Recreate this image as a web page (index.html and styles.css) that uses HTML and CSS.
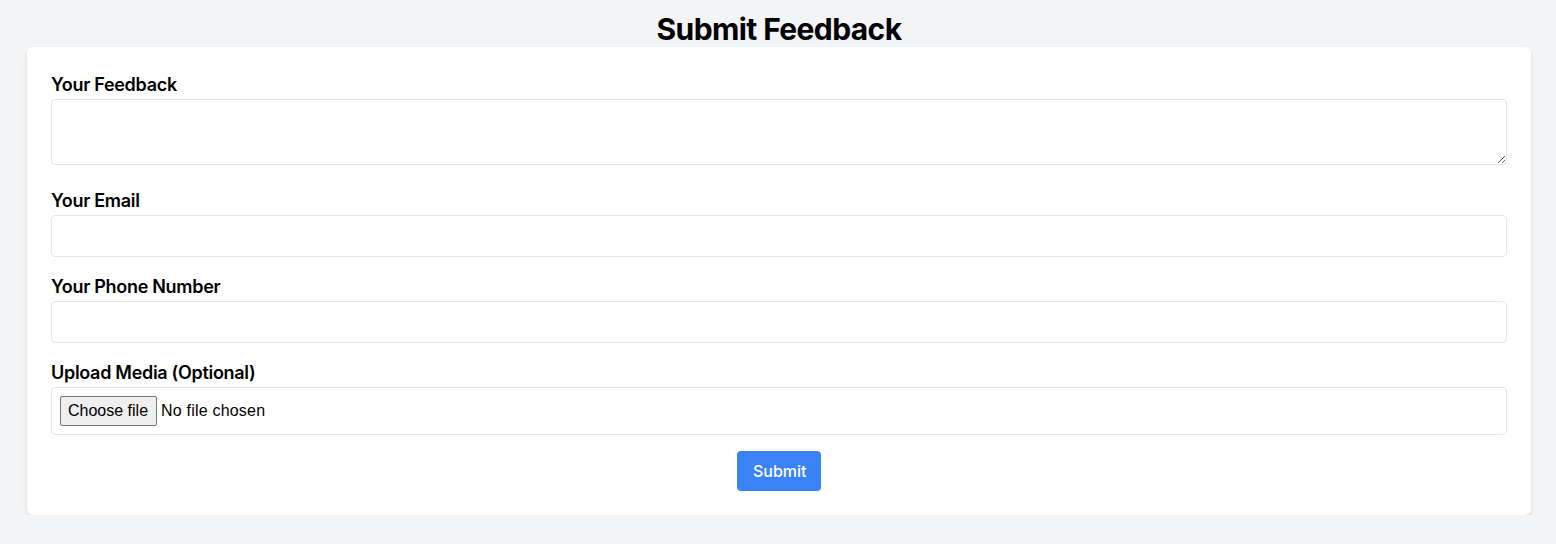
FILE: index.html
```html
<!DOCTYPE html>
<html lang="en">
<head>
<meta charset="utf-8">
<title>Submit Feedback</title>
<link rel="stylesheet" href="styles.css">
</head>
<body>
<h1 class="title">Submit Feedback</h1>
<form class="card">
  <div class="field field-tall">
    <label class="label" for="fb">Your Feedback</label>
    <textarea id="fb" class="control area" rows="2"></textarea>
  </div>
  <div class="field">
    <label class="label" for="em">Your Email</label>
    <input id="em" class="control" type="email">
  </div>
  <div class="field">
    <label class="label" for="ph">Your Phone Number</label>
    <input id="ph" class="control" type="tel">
  </div>
  <div class="field">
    <label class="label" for="md">Upload Media (Optional)</label>
    <div class="control file">
      <input id="md" class="file-input" type="file">
      <label class="file-btn" for="md">Choose file</label>
      <span class="file-status">No file chosen</span>
    </div>
  </div>
  <div class="actions">
    <button class="submit" type="button">Submit</button>
  </div>
</form>
</body>
</html>
```
FILE: styles.css
```css
* { box-sizing: border-box; }
html, body { margin: 0; }
body {
  background: #f3f4f6;
  font-family: Inter, "Noto Sans", sans-serif;
  color: #000;
  padding: 11px 25px 0 27px;
  line-height: 1.5;
}
.title {
  margin: 0;
  text-align: center;
  font-size: 30px;
  line-height: 36px;
  font-weight: 700;
  letter-spacing: -0.6px;
}
.card {
  background: #fff;
  border-radius: 6px;
  box-shadow: 0 4px 6px -1px rgba(0,0,0,0.1), 0 2px 4px -2px rgba(0,0,0,0.1);
  padding: 24px;
}
.field { margin-bottom: 16px; }
.field-tall { margin-bottom: 22px; }
.label {
  display: block;
  font-size: 18px;
  line-height: 28px;
  font-weight: 600;
  letter-spacing: -0.3px;
}
.control {
  display: block;
  width: 100%;
  border: 1px solid #e5e7eb;
  border-radius: 4px;
  padding: 8px;
  font-family: "Liberation Sans", Arial, sans-serif;
  font-size: 16px;
  line-height: 24px;
  height: 42px;
  background: #fff;
  color: #000;
  outline: none;
}
.area {
  height: 66px;
  resize: vertical;
}
.file {
  height: 48px;
  display: flex;
  align-items: center;
}
.file-input {
  display: none;
}
.file-btn {
  font-family: "Liberation Sans", Arial, sans-serif;
  font-size: 16px;
  line-height: 24px;
  height: 30px;
  padding: 2px 8px 2px 7px;
  margin-right: 4px;
  border: 1px solid #767676;
  border-radius: 2px;
  background: #efefef;
  color: #000;
}
.file-status {
  font-size: 16px;
  line-height: 24px;
  letter-spacing: 0.2px;
}
.actions {
  display: flex;
  justify-content: center;
}
.submit {
  background: #3b82f6;
  color: #fff;
  border: none;
  border-radius: 4px;
  padding: 8px 16px;
  font-family: Inter, "Noto Sans", sans-serif;
  font-size: 16px;
  line-height: 24px;
  font-weight: 500;
  width: 84px;
  height: 40px;
}
```
